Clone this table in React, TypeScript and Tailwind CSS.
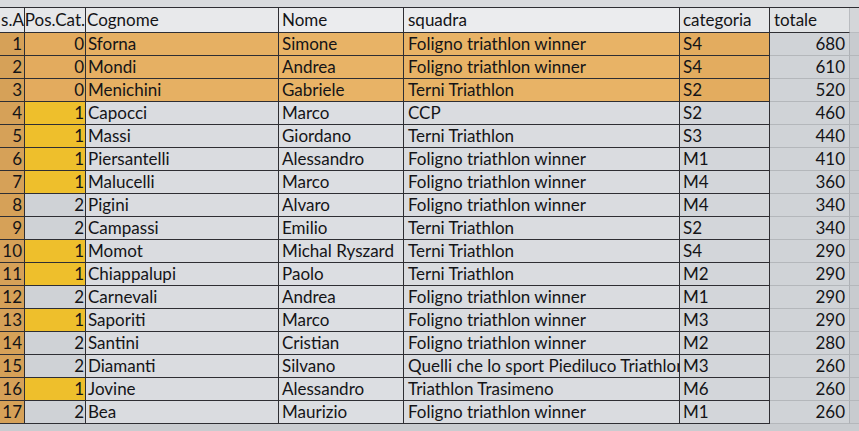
import React from 'react'

type Row = [number, number, string, string, string, string, number]

const rows: Row[] = [
  [1, 0, 'Sforna', 'Simone', 'Foligno triathlon winner', 'S4', 680],
  [2, 0, 'Mondi', 'Andrea', 'Foligno triathlon winner', 'S4', 610],
  [3, 0, 'Menichini', 'Gabriele', 'Terni Triathlon', 'S2', 520],
  [4, 1, 'Capocci', 'Marco', 'CCP', 'S2', 460],
  [5, 1, 'Massi', 'Giordano', 'Terni Triathlon', 'S3', 440],
  [6, 1, 'Piersantelli', 'Alessandro', 'Foligno triathlon winner', 'M1', 410],
  [7, 1, 'Malucelli', 'Marco', 'Foligno triathlon winner', 'M4', 360],
  [8, 2, 'Pigini', 'Alvaro', 'Foligno triathlon winner', 'M4', 340],
  [9, 2, 'Campassi', 'Emilio', 'Terni Triathlon', 'S2', 340],
  [10, 1, 'Momot', 'Michal Ryszard', 'Terni Triathlon', 'S4', 290],
  [11, 1, 'Chiappalupi', 'Paolo', 'Terni Triathlon', 'M2', 290],
  [12, 2, 'Carnevali', 'Andrea', 'Foligno triathlon winner', 'M1', 290],
  [13, 1, 'Saporiti', 'Marco', 'Foligno triathlon winner', 'M3', 290],
  [14, 2, 'Santini', 'Cristian', 'Foligno triathlon winner', 'M2', 280],
  [15, 2, 'Diamanti', 'Silvano', 'Quelli che lo sport Piediluco Triathlon', 'M3', 260],
  [16, 1, 'Jovine', 'Alessandro', 'Triathlon Trasimeno', 'M6', 260],
  [17, 2, 'Bea', 'Maurizio', 'Foligno triathlon winner', 'M1', 260],
]

const cols = 'grid-cols-[25px_61px_193px_125px_276px_90px_80px_1fr]'
const cell = 'h-[23px] flex items-center overflow-hidden whitespace-nowrap border-r border-b border-[#2e2e33]'

export default function App() {
  return (
    <div
      className="w-[859px] h-[431px] overflow-hidden bg-[#c9ccd0] text-[#141417] text-[17px]"
      style={{ fontFamily: 'Lato, "Open Sans", sans-serif' }}
    >
      <div className="h-[8px] bg-[#d9dbde] border-b border-[#2e2e33]" />

      {/* header */}
      <div className={`grid ${cols}`}>
        <div className={`${cell} h-[25px] justify-end bg-[#e6e7e9]`}>s.A</div>
        <div className={`${cell} h-[25px] justify-end bg-[#e6e7e9]`}>Pos.Cat.</div>
        <div className={`${cell} h-[25px] pl-[1px] bg-[#e8e9eb]`}>Cognome</div>
        <div className={`${cell} h-[25px] pl-[3px] bg-[#ebecee]`}>Nome</div>
        <div className={`${cell} h-[25px] pl-[4px] bg-[#ebecee]`}>squadra</div>
        <div className={`${cell} h-[25px] pl-[3px] bg-[#e6e7e9]`}>categoria</div>
        <div className={`${cell} h-[25px] pl-[4px] bg-[#e1e3e5] border-r-[#b9bcc0]`}>totale</div>
        <div className={`${cell} h-[25px] bg-[#d4d6d9] border-r-0 border-b-[#b9bcc0]`} />
      </div>

      {rows.map(([pos, cat, cognome, nome, squadra, categoria, totale]) => {
        const top = pos <= 3
        const rowBg = top ? 'bg-[#e6b063]' : 'bg-[#dadce0]'
        const catBg = top ? 'bg-[#e3ab5e]' : cat === 1 ? 'bg-[#eebf2c]' : 'bg-[#cfd2d6]'
        return (
          <div key={pos} className={`grid ${cols}`}>
            <div className={`${cell} justify-end pr-[2px] bg-[#d6a158]`}>{pos}</div>
            <div className={`${cell} justify-end pr-[1px] ${catBg}`}>{cat}</div>
            <div className={`${cell} pl-[2px] ${rowBg}`}>{cognome}</div>
            <div className={`${cell} pl-[3px] ${top ? 'bg-[#e8b366]' : 'bg-[#dcdee2]'}`}>{nome}</div>
            <div className={`${cell} pl-[4px] ${top ? 'bg-[#e8b366]' : 'bg-[#dadce0]'}`}>{squadra}</div>
            <div className={`${cell} pl-[3px] ${top ? 'bg-[#e3ac5f]' : 'bg-[#d3d6da]'}`}>{categoria}</div>
            <div className={`${cell} justify-end pr-[4px] bg-[#d0d3d7] border-r-[#aeb1b6] border-b-[#b4b7bb]`}>{totale}</div>
            <div className={`${cell} bg-[#c8cbcf] border-r-0 border-b-[#b4b7bb]`} />
          </div>
        )
      })}
    </div>
  )
}
